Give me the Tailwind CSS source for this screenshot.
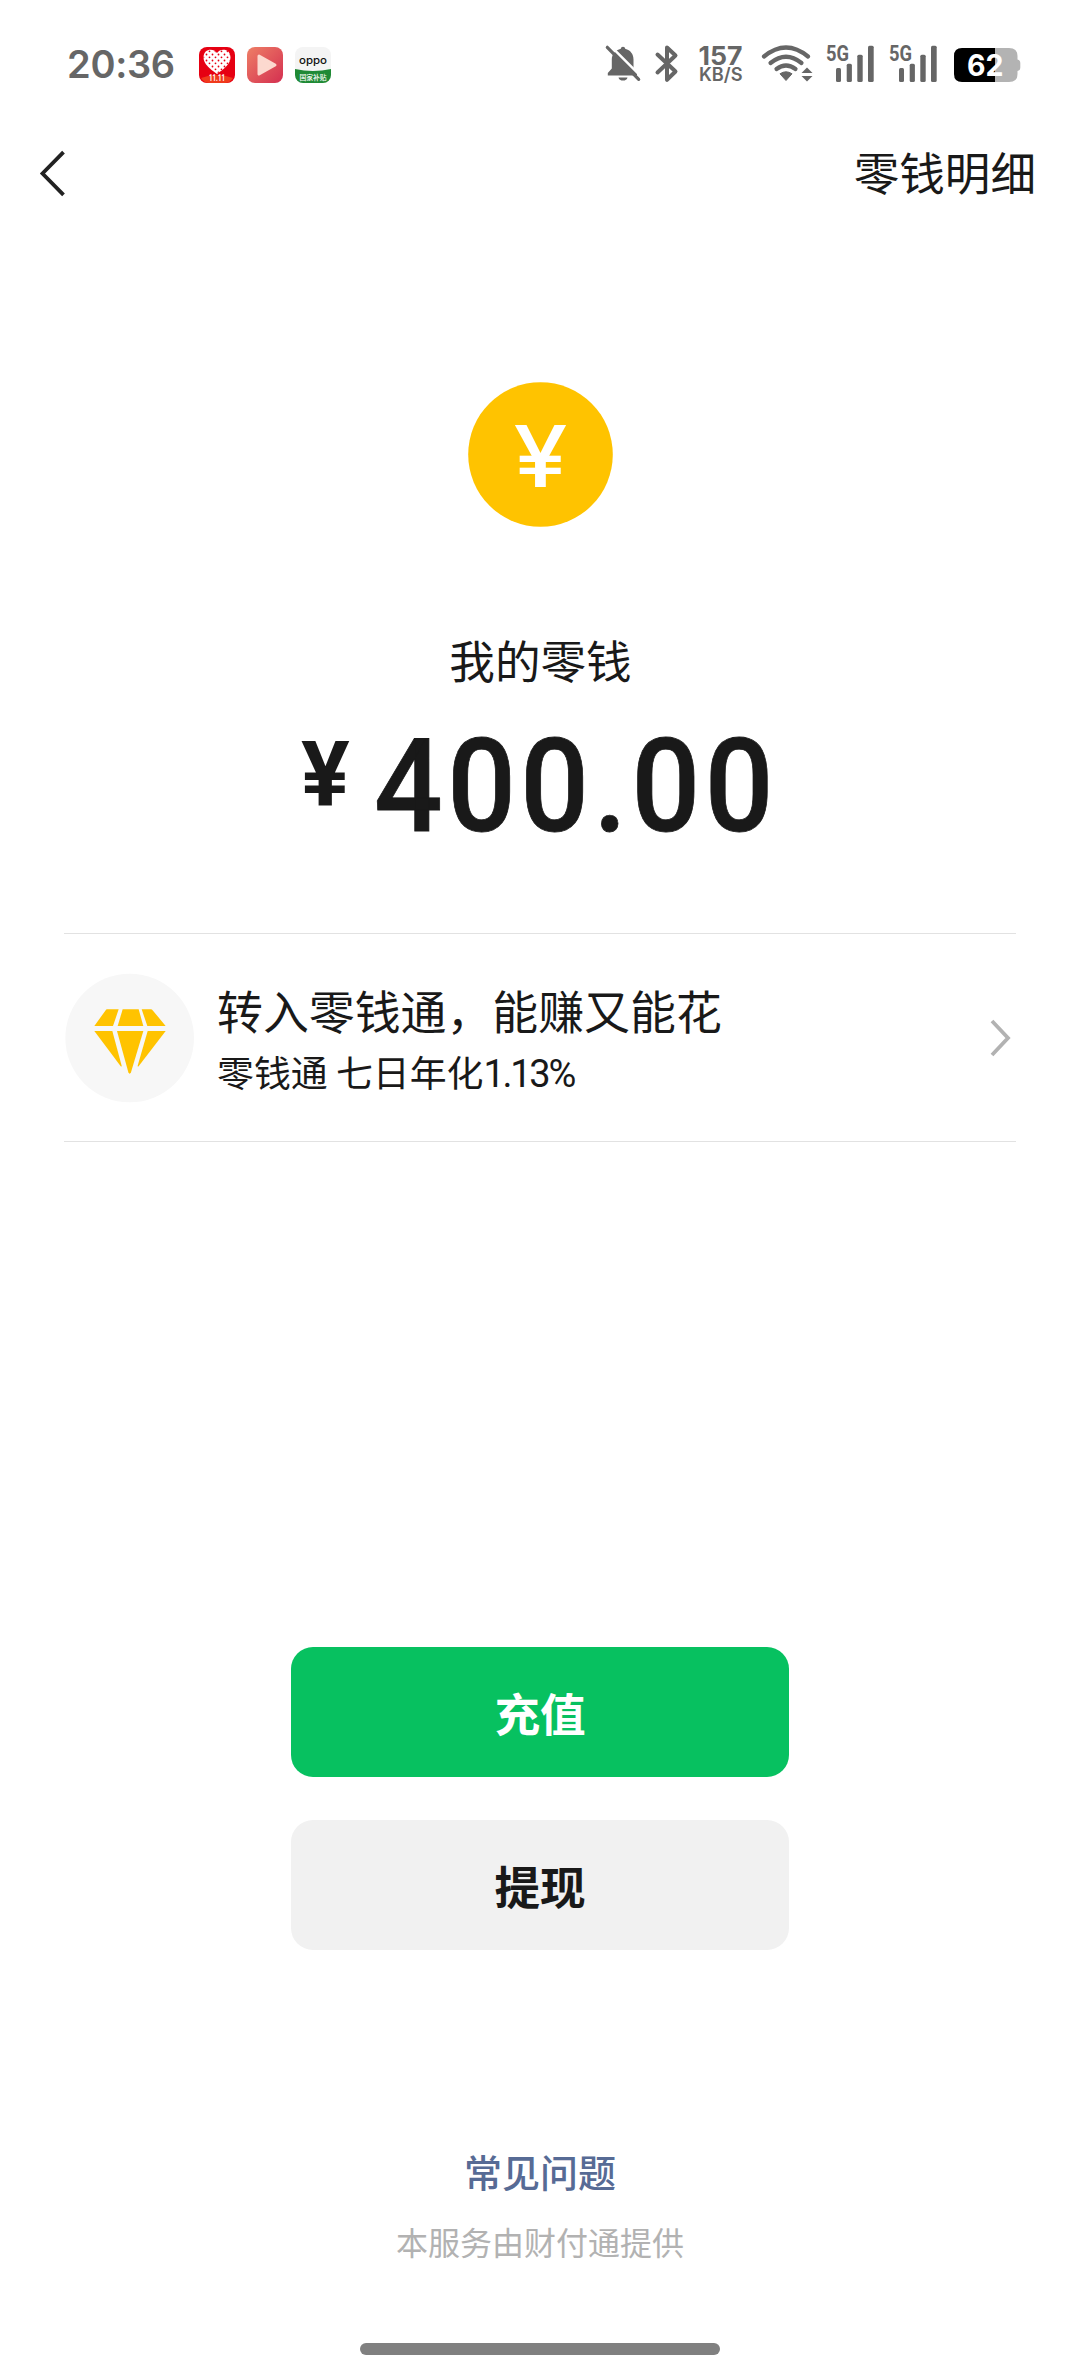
<!DOCTYPE html>
<html lang="zh-CN">
<head>
<meta charset="utf-8">
<title>我的零钱</title>
<script src="https://cdn.jsdelivr.net/npm/@tailwindcss/browser@4"></script>
</head>
<body class="bg-white">
<div class="flex h-[2376px] w-[1080px] flex-col overflow-hidden bg-white font-['Noto_Sans_CJK_SC',sans-serif] text-[#191919]">

  <!-- status bar -->
  <div class="flex h-[130px] shrink-0 items-start pt-[44px] pl-[67px] text-[#666]">
    <div class="h-[40px] w-[132px] font-['Inter',sans-serif] text-[38px] leading-[40px] font-semibold tracking-[-0.3px] whitespace-nowrap">20:36</div>
    <div class="flex gap-[12px] pt-[3px]">
      <svg class="size-[36px]" viewBox="0 0 36 36">
        <defs>
          <pattern id="lace" width="6" height="6" patternUnits="userSpaceOnUse">
            <circle cx="1.5" cy="1.5" r="0.9" fill="#e60012"/><circle cx="4.5" cy="4.3" r="0.9" fill="#e60012"/>
          </pattern>
          <linearGradient id="play" x1="0" y1="0" x2="1" y2="1"><stop offset="0" stop-color="#ee7f66"/><stop offset="1" stop-color="#d42f50"/></linearGradient>
          <clipPath id="tile"><rect width="36" height="36" rx="8"/></clipPath>
        </defs>
        <rect width="36" height="36" rx="8" fill="#e60012"/>
        <path d="M2 31Q18 25 34 31Q31 36 26 36H10Q5 36 2 31Z" fill="#f03a1c"/>
        <path d="M18 6C21 1 31.500 1 31.500 10.500C31.500 17 25 22 18 27C11 22 4.500 17 4.500 10.500C4.500 1 15 1 18 6Z" fill="#fff"/>
        <path d="M18 6C21 1 31.500 1 31.500 10.500C31.500 17 25 22 18 27C11 22 4.500 17 4.500 10.500C4.500 1 15 1 18 6Z" fill="url(#lace)"/>
        <text x="10" y="34.300" textLength="16" lengthAdjust="spacingAndGlyphs" font-family="Roboto" font-weight="700" font-size="9.500" fill="#fff">11.11</text>
      </svg>
      <svg class="size-[36px]" viewBox="0 0 36 36">
        <rect width="36" height="36" rx="8" fill="url(#play)"/>
        <path d="M12 9L28 18L12 27Z" fill="#fcd9cf" stroke="#fcd9cf" stroke-width="3" stroke-linejoin="round"/>
      </svg>
      <svg class="size-[36px]" viewBox="0 0 36 36">
        <g clip-path="url(#tile)">
          <rect width="36" height="36" fill="#f4f4f4"/>
          <path d="M0 22Q18 26 36 22V36H0Z" fill="#1f8a35"/>
          <text x="4" y="17" font-family="Inter" font-weight="500" font-size="10.500" textLength="28" lengthAdjust="spacingAndGlyphs" fill="#111">oppo</text>
          <text x="18" y="32.800" text-anchor="middle" font-family="Noto Sans CJK SC" font-weight="500" font-size="6.800" fill="#fff">国家补贴</text>
        </g>
      </svg>
    </div>

    <!-- muted bell -->
    <svg class="ml-[273px] h-[40px] w-[40px]" viewBox="604 44 40 40">
      <path d="M623 46.8C624.3 46.8 625 47.6 625.2 48.8C630.500 50.200 633.500 54.200 633.500 59.500V68L637 73V75.500H607.800V73L611.800 68.500V59.500C611.800 54.200 615.500 50.200 620.800 48.800C621 47.600 621.700 46.800 623 46.800Z" fill="#666"/>
      <path d="M618.500 77.500H627.500C627 79.700 625.400 80.600 623 80.600C620.600 80.600 619 79.700 618.500 77.500Z" fill="#666"/>
      <path d="M608.500 43.900L641.500 76.900" stroke="#fff" stroke-width="2.500"/>
      <path d="M607.300 47.300L638.700 79.300" stroke="#666" stroke-width="3.200" stroke-linecap="round"/>
    </svg>
    <!-- bluetooth -->
    <svg class="ml-[10px] h-[40px] w-[26px]" viewBox="654 44 26 40">
      <path d="M657.500 54.500L675.500 71.500L667 79.800V47.500L675.500 55.500L657.500 72.500" fill="none" stroke="#666" stroke-width="4" stroke-linejoin="round" stroke-linecap="round"/>
    </svg>
    <!-- network speed -->
    <svg class="ml-[17px] h-[40px] w-[48px] overflow-visible" viewBox="696 44 48 40">
      <text x="697.500" y="65" textLength="44" lengthAdjust="spacingAndGlyphs" font-family="Inter" font-weight="700" font-size="26" fill="#666">157</text>
      <text x="698" y="81.300" textLength="43.500" lengthAdjust="spacingAndGlyphs" font-family="Inter" font-weight="600" font-size="18.500" fill="#666">KB/S</text>
    </svg>
    <!-- wifi -->
    <svg class="ml-[16px] h-[40px] w-[54px]" viewBox="760 44 54 40">
      <g fill="none" stroke="#666" stroke-width="4.200" stroke-linecap="round">
        <path d="M763 56.500Q785 38.500 807 56.500"/>
        <path d="M769.500 63Q785 50.500 800.500 63"/>
        <path d="M775.500 69Q785 62 794.500 69"/>
      </g>
      <path d="M779 73.800Q785 69.800 791 73.800L785 80.500Z" fill="#666" stroke="#666" stroke-linejoin="round"/>
      <path d="M806 67.500L811.500 73H800.500Z" fill="#666"/>
      <path d="M806 81.500L811.500 76H800.500Z" fill="#666"/>
    </svg>
    <!-- signal, SIM 1 -->
    <svg class="ml-[10px] h-[40px] w-[50px] overflow-visible" viewBox="824 44 50 40">
      <text x="825" y="61" textLength="23" lengthAdjust="spacingAndGlyphs" font-family="Roboto" font-weight="700" font-size="22" fill="#666">5G</text>
      <g fill="#666"><rect x="835" y="68" width="5" height="14" rx="1.500"/><rect x="845.700" y="63.700" width="5.200" height="18.300" rx="1.500"/><rect x="856.300" y="54.700" width="5.400" height="27.300" rx="1.500"/><rect x="867" y="45.800" width="5.700" height="36.200" rx="1.500"/></g>
    </svg>
    <!-- signal, SIM 2 -->
    <svg class="ml-[13px] h-[40px] w-[50px] overflow-visible" viewBox="824 44 50 40">
      <text x="825" y="61" textLength="23" lengthAdjust="spacingAndGlyphs" font-family="Roboto" font-weight="700" font-size="22" fill="#666">5G</text>
      <g fill="#666"><rect x="835" y="68" width="5" height="14" rx="1.500"/><rect x="845.700" y="63.700" width="5.200" height="18.300" rx="1.500"/><rect x="856.300" y="54.700" width="5.400" height="27.300" rx="1.500"/><rect x="867" y="45.800" width="5.700" height="36.200" rx="1.500"/></g>
    </svg>
    <!-- battery -->
    <svg class="ml-[15px] h-[40px] w-[70px]" viewBox="952 44 70 40">
      <path d="M961 48H1008Q1016.500 48 1016.500 56V59.500Q1019.300 60 1019.300 63V67.500Q1019.300 70.500 1016.500 71V74Q1016.500 82 1008 82H990V48Z" fill="#b3b3b3"/>
      <path d="M961 48H994V82H961Q953 82 953 74V56Q953 48 961 48Z" fill="#000"/>
      <text x="966" y="76.300" textLength="36.500" lengthAdjust="spacingAndGlyphs" font-family="Inter" font-weight="700" font-size="30" fill="#fff">62</text>
    </svg>
  </div>

  <!-- navigation -->
  <div class="flex h-[82px] shrink-0 items-center justify-between pr-[44px] pl-[36px]">
    <svg class="mt-[4px] h-[50px] w-[34px]" viewBox="0 0 34 50"><path d="M27.500 4.200L6.500 25.500L27.500 46.800" fill="none" stroke="#222" stroke-width="3.800"/></svg>
    <div class="text-[45.600px] leading-[60px]">零钱明细</div>
  </div>

  <!-- balance -->
  <div class="flex shrink-0 flex-col items-center pt-[170px]">
    <svg class="size-[145px]" viewBox="0 0 145 145">
      <circle cx="72.500" cy="72.500" r="72.300" fill="#ffc300"/>
      <text transform="translate(72.500 104.500) scale(1.140 1)" text-anchor="middle" font-family="Inter" font-weight="500" font-size="85" fill="#fff">¥</text>
    </svg>
    <div class="mt-[102px] pl-px text-[45.600px] leading-[60px]">我的零钱</div>
    <div class="mt-[23px] flex w-full items-start pl-[301px] font-['Roboto',sans-serif] font-medium">
      <span class="mt-[18px] w-[73px] text-[91px] leading-[91px] font-bold">¥</span>
      <span class="origin-left scale-x-[0.93] text-[130px] leading-[150px] tracking-[4.8px] whitespace-nowrap [-webkit-text-stroke:0.8px_#191919]">400.00</span>
    </div>
  </div>

  <!-- fund promotion -->
  <div class="mx-[64px] mt-[71px] flex h-[209px] shrink-0 items-center border-y-[1.500px] border-[#e2e2e2]">
    <svg class="size-[130px]" viewBox="43 158 390 390">
      <circle cx="240" cy="353" r="193" fill="#f7f7f7"/>
      <g fill="#ffc300">
        <path d="M173 267H207L190 317H134L167 271Q169 267 173 267Z"/>
        <path d="M219 267H267L281 317H204Z"/>
        <path d="M276 267H303Q307 267 310 271L348 317H293Z"/>
        <path d="M134 332H188L216 436Q216 441 212 436Z"/>
        <path d="M202 332H281L244 456Q240 464 236 456Z"/>
        <path d="M294 332H348L268 436Q264 441 264 436Z"/>
      </g>
    </svg>
    <div class="ml-[23px] flex-1 pt-[7px]">
      <div class="text-[45.900px] leading-[62px]">转入零钱通，能赚又能花</div>
      <div class="text-[36.900px] leading-[62px]">零钱通 七日年化<span class="font-['Roboto',sans-serif] text-[38px] tracking-[-2.3px]">1.13%</span></div>
    </div>
    <svg class="mr-[3px] h-[40px] w-[24px]" viewBox="0 0 24 40"><path d="M3 3L19 20L3 37" fill="none" stroke="#b2b2b2" stroke-width="3.800"/></svg>
  </div>

  <!-- actions -->
  <div class="mt-[505px] flex shrink-0 flex-col items-center gap-[43px]">
    <button class="h-[130px] w-[498px] rounded-[22px] bg-[#07c160] text-[45.600px] font-bold text-white">充值</button>
    <button class="h-[130px] w-[498px] rounded-[22px] bg-[#f1f1f1] text-[45.600px] font-bold">提现</button>
  </div>

  <!-- footer -->
  <div class="mt-[191px] flex shrink-0 flex-col items-center">
    <div class="text-[38px] leading-[60px] font-medium text-[#576b95]">常见问题</div>
    <div class="mt-[20px] text-[32px] leading-[40px] text-[#b2b2b2]">本服务由财付通提供</div>
    <div class="mt-[82px] h-[12px] w-[360px] rounded-full bg-[#808080]"></div>
  </div>
</div>
</body>
</html>
